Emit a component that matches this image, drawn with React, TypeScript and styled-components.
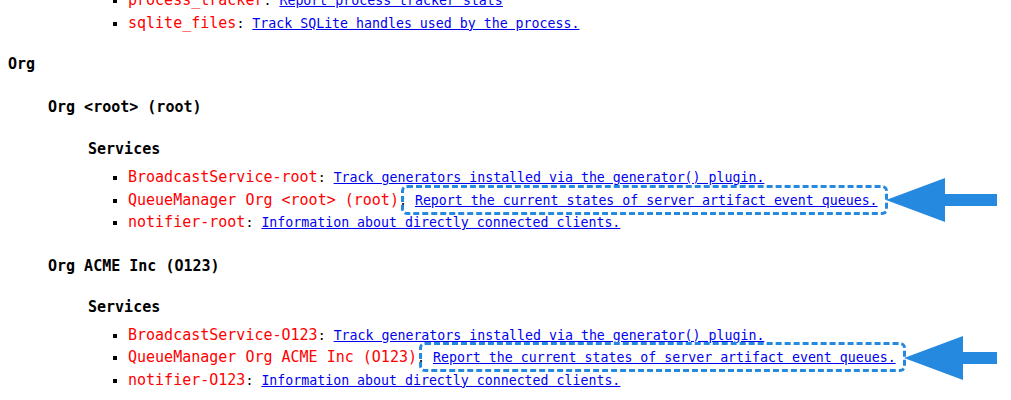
import React from 'react';
import styled, { createGlobalStyle } from 'styled-components';

const GlobalStyle = createGlobalStyle`
  html, body {
    margin: 0;
    padding: 0;
    background: #ffffff;
  }
  body {
    font-family: "DejaVu Sans Mono", "Liberation Mono", monospace;
    color: #000000;
    overflow: hidden;
  }
`;

const Page = styled.main`
  padding: 0 8px;
  margin-top: -10px;
`;

const Indent = styled.div`
  padding-left: 40px;
`;

const Heading = styled.div<{ $gap: number }>`
  margin-top: ${(p) => p.$gap}px;
  font-size: 15px;
  font-weight: bold;
  line-height: 20px;
`;

const ItemList = styled.ul<{ $gap?: number }>`
  margin: ${(p) => p.$gap ?? 0}px 0 0;
  padding-left: 40px;
  list-style: square;
  font-size: 13.25px;
  line-height: 22.5px;
`;

const Item = styled.li`
  white-space: nowrap;
`;

const Name = styled.span`
  color: #ff0000;
  font-size: 15px;
  line-height: 1;
`;

const DocLink = styled.a`
  color: #0000ee;
  text-decoration: underline;
`;

const Marked = styled.span`
  position: relative;
  &::before {
    content: "";
    position: absolute;
    left: -14px;
    right: -10px;
    top: -8px;
    bottom: -7px;
    border: 3px dashed #2589df;
    border-radius: 6px;
    pointer-events: none;
  }
`;

const ArrowSvg = styled.svg`
  position: absolute;
  left: calc(100% + 8px);
  top: 50%;
  transform: translateY(-50%);
  overflow: visible;
`;

function Arrow({ width }: { width: number }) {
  const h = 44;
  const head = 59;
  const pts = `0,22 ${head},0 ${head},16 ${width},16 ${width},28 ${head},28 ${head},${h}`;
  return (
    <ArrowSvg width={width} height={h} viewBox={`0 0 ${width} ${h}`}>
      <polygon points={pts} fill="#2589df" />
    </ArrowSvg>
  );
}

type Svc = { name: string; doc: string; marked?: boolean; arrow?: number };

function ServiceItem({ name, doc, marked, arrow }: Svc) {
  const link = <DocLink href="#">{doc}</DocLink>;
  return (
    <Item>
      <Name>{name}</Name>:{' '}
      {marked ? (
        <Marked>
          {link}
          {arrow ? <Arrow width={arrow} /> : null}
        </Marked>
      ) : (
        link
      )}
    </Item>
  );
}

const orgs: { title: string; gap: number; svcGap: number; services: Svc[] }[] = [
  {
    title: 'Org <root> (root)',
    gap: 23,
    svcGap: 22,
    services: [
      { name: 'BroadcastService-root', doc: 'Track generators installed via the generator() plugin.' },
      {
        name: 'QueueManager Org <root> (root)',
        doc: 'Report the current states of server artifact event queues.',
        marked: true,
        arrow: 111,
      },
      { name: 'notifier-root', doc: 'Information about directly connected clients.' },
    ],
  },
  {
    title: 'Org ACME Inc (O123)',
    gap: 21,
    svcGap: 21,
    services: [
      { name: 'BroadcastService-O123', doc: 'Track generators installed via the generator() plugin.' },
      {
        name: 'QueueManager Org ACME Inc (O123)',
        doc: 'Report the current states of server artifact event queues.',
        marked: true,
        arrow: 93,
      },
      { name: 'notifier-O123', doc: 'Information about directly connected clients.' },
    ],
  },
];

export default function App() {
  return (
    <>
      <GlobalStyle />
      <Page>
        <Indent>
          <Indent>
            <ItemList>
              <ServiceItem name="process_tracker" doc="Report process tracker stats" />
              <ServiceItem name="sqlite_files" doc="Track SQLite handles used by the process." />
            </ItemList>
          </Indent>
        </Indent>
        <Heading $gap={19}>Org</Heading>
        <Indent>
          {orgs.map((org) => (
            <section key={org.title}>
              <Heading $gap={org.gap}>{org.title}</Heading>
              <Indent>
                <Heading $gap={org.svcGap}>Services</Heading>
                <ItemList $gap={8}>
                  {org.services.map((s) => (
                    <ServiceItem key={s.name} {...s} />
                  ))}
                </ItemList>
              </Indent>
            </section>
          ))}
        </Indent>
      </Page>
    </>
  );
}
